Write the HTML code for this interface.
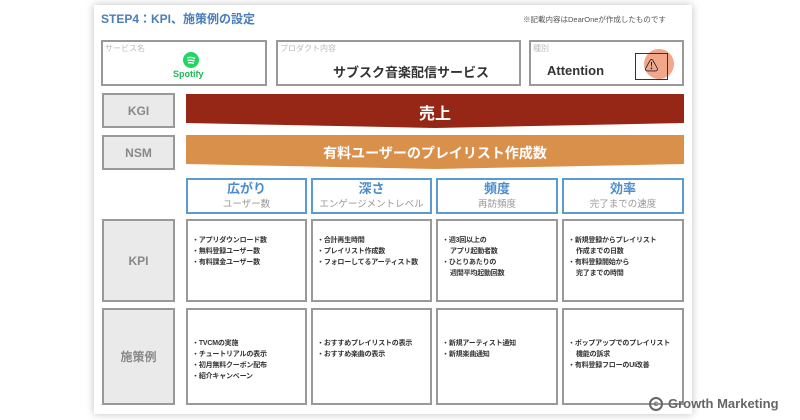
<!DOCTYPE html><html><head><meta charset="utf-8"><style>
*{margin:0;padding:0;box-sizing:border-box}
body{width:800px;height:420px;background:#fff;position:relative;overflow:hidden;font-family:"Liberation Sans","Noto Sans CJK JP",sans-serif}
.card{position:absolute;left:94px;top:5px;width:598px;height:409px;background:#fff;box-shadow:0 0 8px rgba(0,0,0,.25)}
.a{position:absolute}
.box{position:absolute;border:2px solid #999;background:#fff}
.lbl{position:absolute;border:2px solid #999;background:#eaeaea;color:#888;font-weight:bold;font-size:12px;display:flex;align-items:center;justify-content:center}
.sm{position:absolute;left:2px;top:1px;font-size:8px;color:#bbb}
.hd{position:absolute;border:2px solid #5b9bd5;background:#fff;text-align:center;overflow:hidden}
.hd b{display:block;color:#4a8ccc;font-size:13px;line-height:16px;margin-top:1px}
.hd span{display:block;color:#999;font-size:9.5px;line-height:13px;margin-top:1px;white-space:nowrap}
ul{list-style:none;font-size:7px;font-weight:bold;color:#333;line-height:11px;padding:0 0 0 4px;white-space:nowrap;letter-spacing:-0.2px}
li:before{content:"・";}
li.c{padding-left:8px}li.c:before{content:""}
</style></head><body>
<div class="card"></div>
<div class="a" style="left:101px;top:10px;color:#4a7ebb;font-weight:bold;font-size:12px">STEP4：KPI、施策例の設定</div>
<div class="a" style="left:523px;top:14px;color:#555;font-size:7.5px">※記載内容はDearOneが作成したものです</div>

<div class="box" style="left:101px;top:40px;width:166px;height:46px"><div class="sm">サービス名</div>
<svg class="a" style="left:80px;top:10px" width="16" height="16"><circle cx="8" cy="8" r="8" fill="#1ed760"/><path d="M4 6q4-1.5 8 .5M4.5 8.5q3.5-1 7 .5M5 11q3-.8 6 .4" stroke="#fff" stroke-width="1.3" fill="none"/></svg>
<div class="a" style="left:70px;top:27px;color:#1db954;font-weight:bold;font-size:9px">Spotify</div></div>
<div class="box" style="left:276px;top:40px;width:245px;height:46px"><div class="sm">プロダクト内容</div>
<div class="a" style="left:55px;top:20px;font-size:13px;font-weight:bold;color:#333">サブスク音楽配信サービス</div></div>
<div class="box" style="left:529px;top:40px;width:155px;height:46px"><div class="sm">種別</div>
<div class="a" style="left:16px;top:21px;font-size:13px;font-weight:bold;color:#333">Attention</div>
<div class="a" style="left:113px;top:7px;width:30px;height:30px;border-radius:50%;background:#f2a78a"></div>
<div class="a" style="left:104px;top:11px;width:33px;height:27px;border:1.5px solid #333;font-size:14px;text-align:center;line-height:24px;color:#222">⚠</div></div>

<div class="lbl" style="left:102px;top:93px;width:73px;height:35px">KGI</div>
<svg class="a" style="left:186px;top:94px" width="498" height="34"><polygon points="0,0 498,0 498,29 249,34 0,29" fill="#962716"/></svg>
<div class="a" style="left:186px;top:100px;width:498px;text-align:center;color:#fff;font-size:16px;font-weight:bold">売上</div>
<div class="lbl" style="left:102px;top:135px;width:73px;height:35px">NSM</div>
<svg class="a" style="left:186px;top:135px" width="498" height="34"><polygon points="0,0 498,0 498,29 249,34 0,29" fill="#d9904a"/></svg>
<div class="a" style="left:186px;top:143px;width:498px;text-align:center;color:#fff;font-size:14px;font-weight:bold">有料ユーザーのプレイリスト作成数</div>

<div class="hd" style="left:186px;top:178px;width:121px;height:36px"><b>広がり</b><span>ユーザー数</span></div>
<div class="hd" style="left:311px;top:178px;width:121px;height:36px"><b>深さ</b><span>エンゲージメントレベル</span></div>
<div class="hd" style="left:436px;top:178px;width:122px;height:36px"><b>頻度</b><span>再訪頻度</span></div>
<div class="hd" style="left:562px;top:178px;width:122px;height:36px"><b>効率</b><span>完了までの速度</span></div>

<div class="lbl" style="left:102px;top:219px;width:73px;height:83px">KPI</div>
<div class="box" style="left:186px;top:219px;width:121px;height:83px;padding-top:14px"><ul><li>アプリダウンロード数</li><li>無料登録ユーザー数</li><li>有料課金ユーザー数</li></ul></div>
<div class="box" style="left:311px;top:219px;width:121px;height:83px;padding-top:14px"><ul><li>合計再生時間</li><li>プレイリスト作成数</li><li>フォローしてるアーティスト数</li></ul></div>
<div class="box" style="left:436px;top:219px;width:122px;height:83px;padding-top:14px"><ul><li>週3回以上の</li><li class="c">アプリ起動者数</li><li>ひとりあたりの</li><li class="c">週間平均起動回数</li></ul></div>
<div class="box" style="left:562px;top:219px;width:122px;height:83px;padding-top:14px"><ul><li>新規登録からプレイリスト</li><li class="c">作成までの日数</li><li>有料登録開始から</li><li class="c">完了までの時間</li></ul></div>

<div class="lbl" style="left:102px;top:308px;width:73px;height:97px">施策例</div>
<div class="box" style="left:186px;top:308px;width:121px;height:97px;padding-top:28px"><ul><li>TVCMの実施</li><li>チュートリアルの表示</li><li>初月無料クーポン配布</li><li>紹介キャンペーン</li></ul></div>
<div class="box" style="left:311px;top:308px;width:121px;height:97px;padding-top:28px"><ul><li>おすすめプレイリストの表示</li><li>おすすめ楽曲の表示</li></ul></div>
<div class="box" style="left:436px;top:308px;width:122px;height:97px;padding-top:28px"><ul><li>新規アーティスト通知</li><li>新規楽曲通知</li></ul></div>
<div class="box" style="left:562px;top:308px;width:122px;height:97px;padding-top:28px"><ul><li>ポップアップでのプレイリスト</li><li class="c">機能の訴求</li><li>有料登録フローのUI改善</li></ul></div>

<div class="a" style="left:649px;top:397px;width:14px;height:14px;border:2px solid #666;border-radius:50%;font-size:8px;font-weight:bold;color:#666;text-align:center;line-height:10px">c</div>
<div class="a" style="left:668px;top:396px;font-size:13px;font-weight:bold;color:#666">Growth Marketing</div>
</body></html>
